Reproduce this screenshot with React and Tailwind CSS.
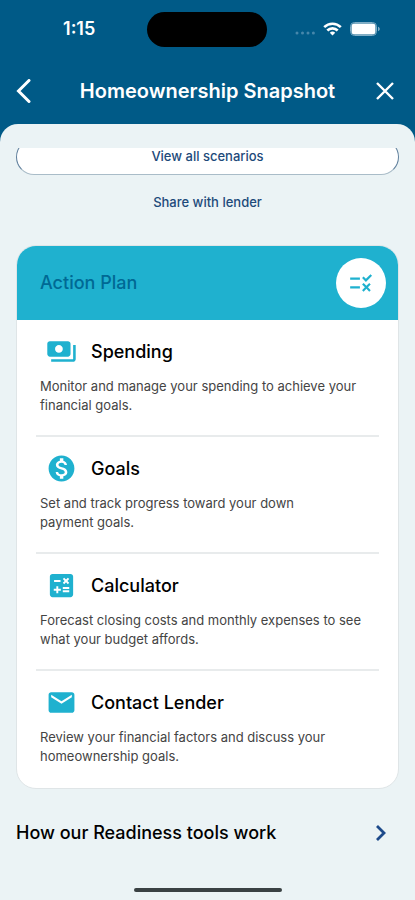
import React from 'react';
import { MdCalculate, MdEmail, MdMonetizationOn, MdPayments, MdRule } from 'react-icons/md';

const actions = [
  {
    title: 'Spending',
    icon: MdPayments,
    lines: ['Monitor and manage your spending to achieve your', 'financial goals.'],
  },
  {
    title: 'Goals',
    icon: MdMonetizationOn,
    lines: ['Set and track progress toward your down', 'payment goals.'],
  },
  {
    title: 'Calculator',
    icon: MdCalculate,
    lines: ['Forecast closing costs and monthly expenses to see', 'what your budget affords.'],
  },
  {
    title: 'Contact Lender',
    icon: MdEmail,
    lines: ['Review your financial factors and discuss your', 'homeownership goals.'],
  },
];

const StatusBar = () => (
  <div className="grid h-[58px] grid-cols-3 items-center text-white">
    <span className="pl-5 text-center text-lg font-semibold">1:15</span>
    <div className="h-[35px] w-[120px] justify-self-center rounded-full bg-black" />
    <div className="flex items-center gap-2 pl-[18px]">
      <svg className="mt-2 h-1 w-5" viewBox="0 0 20 4" fill="#4687ab">
        <circle cx="2" cy="2" r="1.5" />
        <circle cx="7.5" cy="2" r="1.5" />
        <circle cx="13" cy="2" r="1.5" />
        <circle cx="18.4" cy="2" r="1.5" />
      </svg>
      <svg className="h-[14px] w-[19px]" viewBox="0 0 19 14" fill="none" stroke="currentColor" strokeWidth="2.6">
        <path d="M1.2 5.2a11.8 11.8 0 0 1 16.6 0" />
        <path d="M4.3 8.5a7.4 7.4 0 0 1 10.4 0" />
        <path d="M9.5 13.6 6.8 10.8a3.9 3.9 0 0 1 5.4 0z" fill="currentColor" stroke="none" />
      </svg>
      <svg className="h-[14px] w-[31px]" viewBox="0 0 31 14">
        <rect x="0.5" y="0.5" width="26" height="13" rx="4" fill="none" stroke="#7fadc6" />
        <rect x="1.5" y="1.5" width="24" height="11" rx="3" fill="#fff" />
        <path d="M28 4.8v4.4c1.2-.4 1.8-1.2 1.8-2.2s-.6-1.8-1.8-2.2z" fill="#7fadc6" />
      </svg>
    </div>
  </div>
);

const TopBar = () => (
  <div className="flex h-[66px] items-center justify-between px-4 text-white">
    <button type="button" aria-label="Back">
      <svg className="h-6 w-7" viewBox="0 0 28 24" fill="none" stroke="currentColor" strokeWidth="3" strokeLinecap="round">
        <path d="M13 1.5 2.5 12 13 22.5" />
      </svg>
    </button>
    <h1 className="text-xl font-semibold">Homeownership Snapshot</h1>
    <button type="button" aria-label="Close">
      <svg className="h-5 w-7" viewBox="0 0 28 20" fill="none" stroke="currentColor" strokeWidth="2.4">
        <path d="M6 2l16 16M22 2 6 18" />
      </svg>
    </button>
  </div>
);

const ActionItem = ({ title, icon: Icon, lines }) => (
  <li className="h-[117px] px-1 pt-4">
    <div className="flex items-center gap-[14px] pl-[6px]">
      <Icon className="h-[31px] w-[31px] text-[#1fb1cf]" />
      <h3 className="text-lg leading-7 font-medium text-black">{title}</h3>
    </div>
    <p className="mt-[10px] text-[13px] leading-[19px] text-[#444]">
      {lines.map((line) => (
        <span key={line} className="block">{line}</span>
      ))}
    </p>
  </li>
);

const App = () => {
  return (
    <div className="flex min-h-screen flex-col bg-[#005a87] font-['Inter',sans-serif]">
      <header>
        <StatusBar />
        <TopBar />
      </header>

      <main className="flex grow flex-col rounded-t-[18px] bg-[#ebf3f5] px-4 pt-6">
        {/* the button is scrolled partly under the top edge */}
        <div className="flex h-[27px] items-end overflow-hidden">
          <button
            type="button"
            className="h-9 w-full shrink-0 rounded-full border border-[#5f7f9c] border-b-[#a9bcc8] bg-white text-[13px] font-medium text-[#1d4a7a]"
          >
            View all scenarios
          </button>
        </div>
        <button type="button" className="mt-[17px] self-center text-[13px] font-medium leading-5 text-[#1d4a7a]">
          Share with lender
        </button>

        <section className="mt-[33px] overflow-hidden rounded-[20px] border border-[#dfe5e7] bg-white">
          <div className="flex h-[74px] items-center justify-between bg-[#1fb1cf] pr-3 pl-[23px]">
            <h2 className="text-lg font-medium text-[#006994]">Action Plan</h2>
            <span className="flex h-[50px] w-[50px] items-center justify-center rounded-full bg-white">
              <MdRule className="h-[26px] w-[26px] text-[#1fb1cf]" />
            </span>
          </div>
          <ul className="mx-[19px] divide-y-2 divide-[#e8ebec]">
            {actions.map((action) => (
              <ActionItem key={action.title} {...action} />
            ))}
          </ul>
        </section>

        <button type="button" className="mt-[30px] flex items-center justify-between pr-3 text-black">
          <span className="text-lg font-medium">How our Readiness tools work</span>
          <svg className="h-[18px] w-3" viewBox="0 0 12 18" fill="none" stroke="#1d4a8a" strokeWidth="2.8">
            <path d="M2 2l7 7-7 7" />
          </svg>
        </button>

        <div className="mt-auto mb-2 h-1 w-[148px] self-center rounded-full bg-[#3a4143]" />
      </main>
    </div>
  );
};

export default App;
